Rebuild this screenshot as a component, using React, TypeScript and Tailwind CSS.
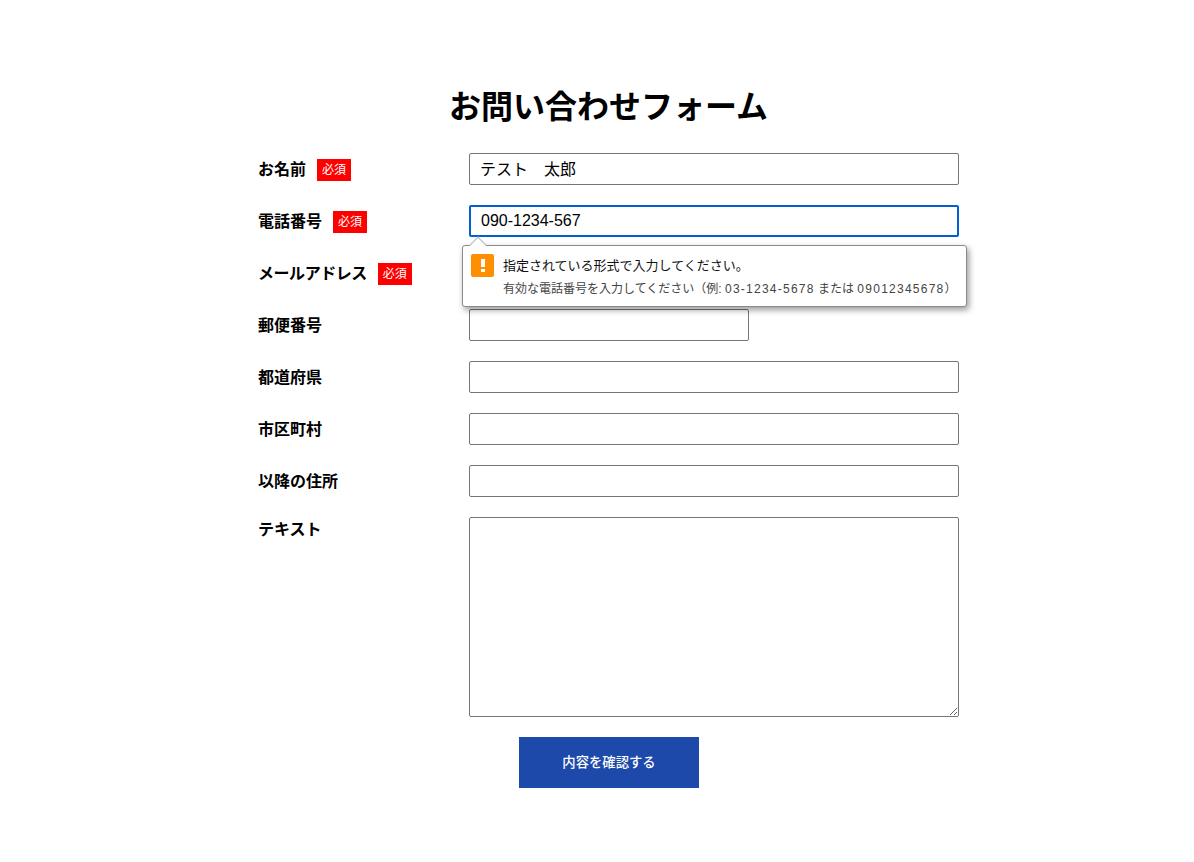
import React from 'react'

const font = { fontFamily: '"Liberation Sans", "Noto Sans CJK JP", sans-serif' }

const inputClass = 'block h-8 w-full rounded-[2px] border border-[#767676] bg-white px-[11px] text-base text-black outline-none'

function Badge() {
  return <span className="ml-[11px] flex h-[22px] w-[34px] items-center justify-center bg-[#ff0000] text-xs font-normal tracking-normal text-white">必須</span>
}

function Row({ label, required, narrow, children }: { label: string; required?: boolean; narrow?: boolean; children: React.ReactNode }) {
  return (
    <div className="flex items-center">
      <div className="-ml-px flex w-[211px] shrink-0 items-center pt-0.5 text-base font-bold text-black">
        <span className={narrow ? 'tracking-[-0.45px]' : ''}>{label}</span>
        {required && <Badge />}
      </div>
      <div className="flex-1">{children}</div>
    </div>
  )
}

function ValidationBubble() {
  return (
    <div className="absolute left-[-7px] top-[40px] z-10 h-[62px] w-[505px] rounded-[3px] border border-[#8a8a8a] bg-white shadow-[2px_3px_6px_rgba(0,0,0,0.4)]">
      <div className="absolute left-[9px] top-[-7px] h-3 w-3 rotate-45 border-l border-t border-[#b5b5b5] bg-white" />
      <div className="relative flex pl-2 pt-2">
        <div className="flex h-[23px] w-[23px] shrink-0 items-center justify-center rounded-[2px] bg-[#ff8e00]">
          <svg width="6" height="15" viewBox="0 0 6 15">
            <rect x="1" y="1" width="4" height="8" fill="#fff" />
            <rect x="1" y="11" width="4" height="3" fill="#fff" />
          </svg>
        </div>
        <div className="ml-[9px]">
          <div className="mt-[3px] text-[13px] leading-[18px] text-[#111]">指定されている形式で入力してください。</div>
          <div className="mt-[5px] whitespace-nowrap text-xs leading-[18px] text-[#444]">
            有効な電話番号を入力してください（例: <span className="tracking-[1.25px]">03-1234-5678</span> または <span className="tracking-[1.25px]">09012345678</span>）
          </div>
        </div>
      </div>
    </div>
  )
}

export default function App() {
  return (
    <main className="min-h-[862px] bg-white pt-[83px]" style={font}>
      <div className="ml-[259px] w-[700px]">
        <h1 className="-ml-px text-center text-[32px] font-bold leading-[48px] text-black">お問い合わせフォーム</h1>
        <form className="mt-[22px] flex flex-col gap-5">
          <Row label="お名前" required><input className={`${inputClass} !pl-[10px] pb-0.5`} defaultValue="テスト　太郎" /></Row>
          <Row label="電話番号" required>
            <div className="relative">
              <input className="block h-8 w-full rounded-[2px] border-2 border-[#0060d0] bg-white px-[10px] text-base text-black outline-none" defaultValue="090-1234-567" />
              <ValidationBubble />
            </div>
          </Row>
          <Row label="メールアドレス" required narrow><input className={inputClass} /></Row>
          <Row label="郵便番号"><input className={`${inputClass} !w-[280px]`} /></Row>
          <Row label="都道府県"><input className={inputClass} /></Row>
          <Row label="市区町村"><input className={inputClass} /></Row>
          <Row label="以降の住所"><input className={inputClass} /></Row>
          <div className="flex items-start">
            <div className="-ml-px w-[211px] shrink-0 pt-px text-base font-bold leading-6 text-black">テキスト</div>
            <textarea className="block h-[200px] flex-1 rounded-[2px] border border-[#767676] bg-white outline-none" />
          </div>
          <div className="flex justify-center">
            <button type="button" className="h-[51px] w-[180px] bg-[#1c49aa] text-[13.33px] font-medium text-white">内容を確認する</button>
          </div>
        </form>
      </div>
    </main>
  )
}
